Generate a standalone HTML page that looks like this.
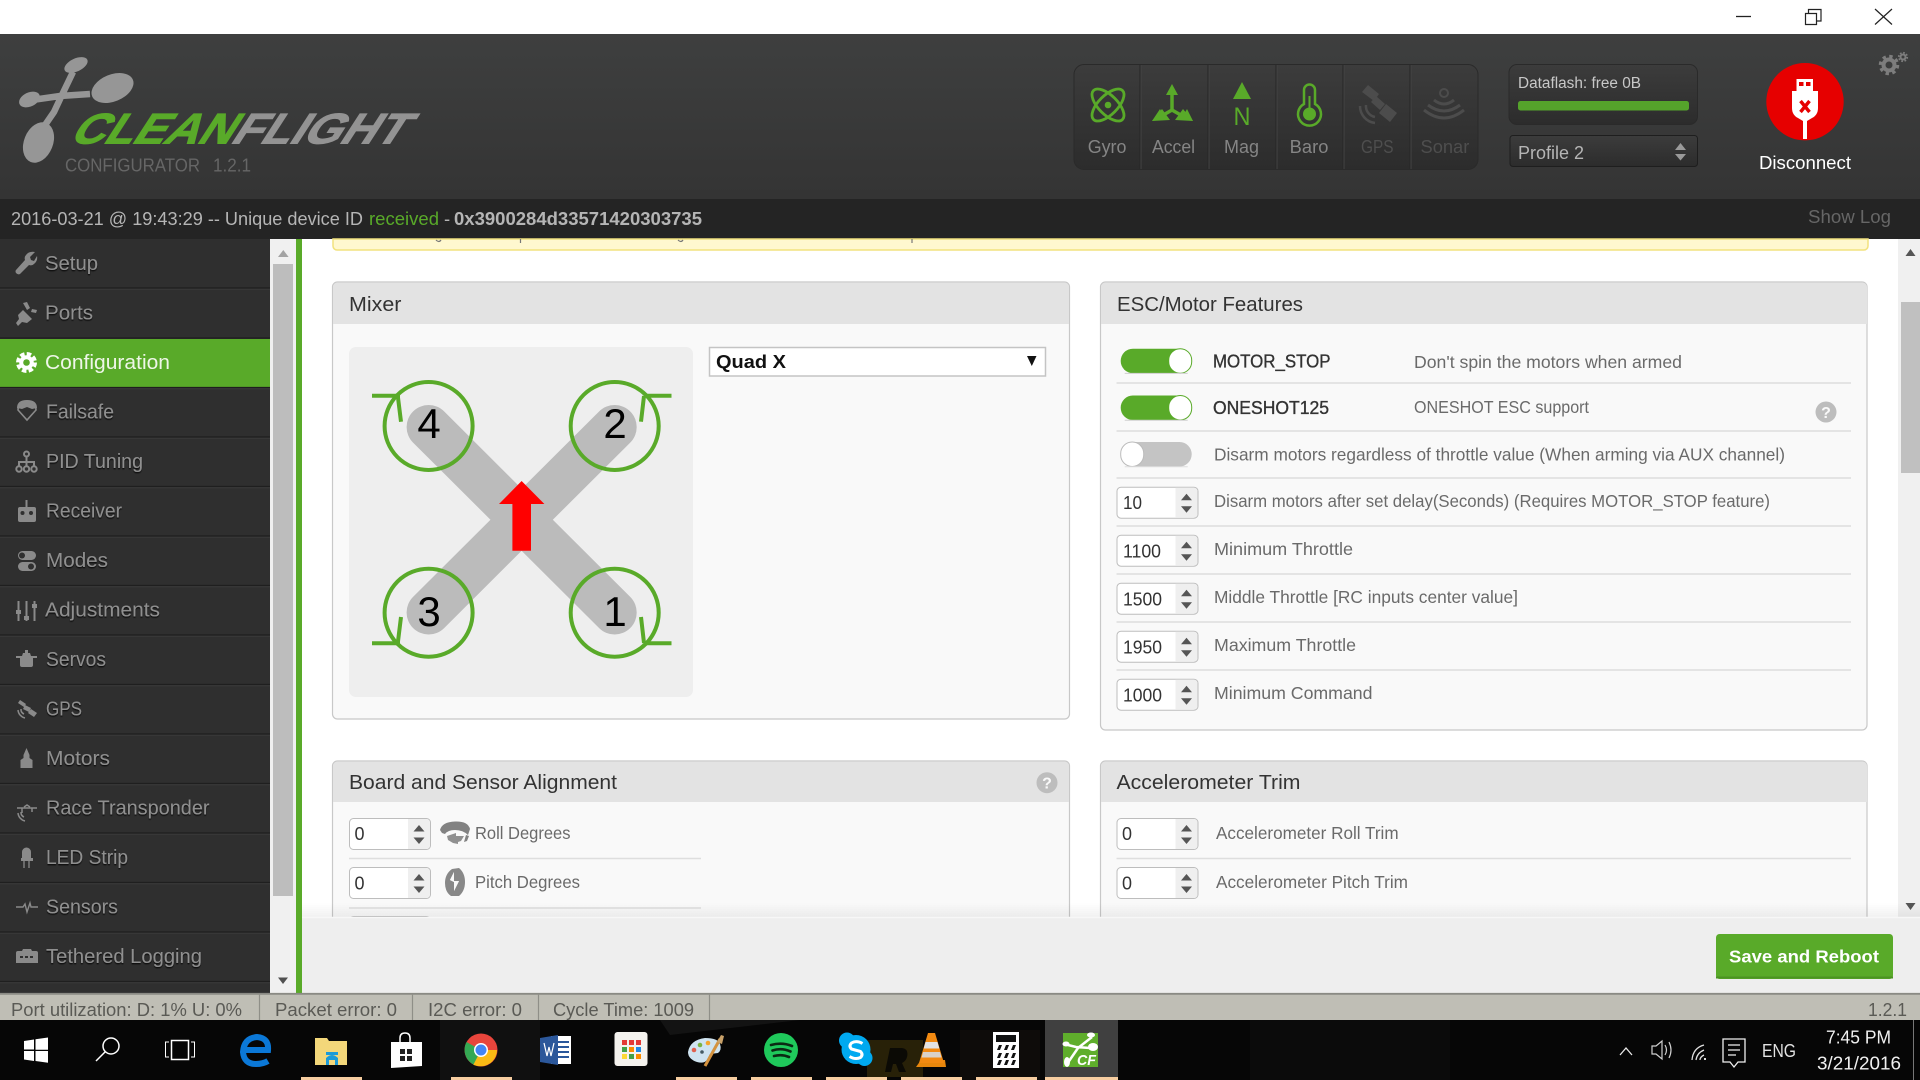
<!DOCTYPE html>
<html lang="en"><head><meta charset="utf-8"><title>Cleanflight Configurator</title>
<style>
html,body{margin:0;padding:0;width:1920px;height:1080px;overflow:hidden;background:#fff}
svg{display:block}
text{font-family:"Liberation Sans",sans-serif;white-space:pre}
.nav{font-size:20px;fill:#8f8f8f}
.ph{font-size:20.5px;fill:#333}
.d{font-size:17.5px;fill:#6a6a6a}
.v{font-size:18px;fill:#333}
.s{font-size:18px;fill:#5a5a55}
.se{font-size:18px;fill:#858585}
.ic{fill:#8a8a8a}
</style></head><body>
<svg xmlns="http://www.w3.org/2000/svg" width="1920" height="1080" viewBox="0 0 1920 1080">
<defs>
<linearGradient id="hd" x1="0" y1="0" x2="0" y2="1"><stop offset="0" stop-color="#3e3f3f"/><stop offset="1" stop-color="#343434"/></linearGradient>
<linearGradient id="grp" x1="0" y1="0" x2="0" y2="1"><stop offset="0" stop-color="#3c3c3c"/><stop offset="1" stop-color="#2c2c2c"/></linearGradient>
<linearGradient id="shd" x1="0" y1="0" x2="0" y2="1"><stop offset="0" stop-color="#000" stop-opacity="0"/><stop offset="1" stop-color="#000" stop-opacity=".06"/></linearGradient>
<filter id="ts" x="-5%" y="-5%" width="110%" height="110%"><feDropShadow dx="0" dy="1.200" stdDeviation=".5" flood-color="#000" flood-opacity=".85"/></filter>
<g id="inp"><rect x=".5" y=".5" width="81" height="31" rx="4" fill="#fff" stroke="#bdbdbd"/><path d="M59 1h18a4 4 0 0 1 4 4v22a4 4 0 0 1-4 4H59z" fill="#efefef"/><path d="M70 7l5.500 6.500h-11zM70 26l-5.500-6.500h11z" fill="#555"/></g>
<g id="ton"><rect x="0" y="0" width="71" height="24.500" rx="12.200" fill="#59aa29"/><rect x="48" y="0" width="23" height="24.500" rx="11.500" fill="#fff" stroke="#59aa29"/><path d="M4 24.700h63" stroke="#cfcfcf" stroke-width="1"/></g>
<g id="tof"><rect x="0" y="0" width="71" height="24.500" rx="12.200" fill="#c4c4c4"/><rect x="0" y="0" width="23" height="24.500" rx="11.500" fill="#fff" stroke="#bbb"/><path d="M4 24.700h63" stroke="#ddd" stroke-width="1"/></g>
<g id="q"><circle r="10.500" fill="#bdbdbd"/><text y="6" x="0" text-anchor="middle" font-size="16" font-weight="bold" fill="#f9f9f9">?</text></g>
</defs>

<!-- title bar -->
<rect width="1920" height="34" fill="#fff"/>
<path d="M1736 16.500h15" stroke="#222" stroke-width="1.300"/>
<path d="M1805.500 13.500h11v11h-11zM1808.500 13v-3.500h12.500v11.500h-4.500" fill="none" stroke="#222" stroke-width="1.200"/>
<path d="M1875 9l17 15.500M1892 9l-17 15.500" stroke="#222" stroke-width="1.200"/>

<!-- header -->
<rect y="34" width="1920" height="165" fill="url(#hd)"/>
<g fill="#969696">
<ellipse cx="112.500" cy="88" rx="22" ry="13.500" transform="rotate(-22 112.500 88)"/>
<ellipse cx="38.500" cy="142.500" rx="21" ry="14.500" transform="rotate(-68 38.500 142.500)"/>
<ellipse cx="76" cy="65" rx="12.500" ry="6.500" transform="rotate(-25 76 65)"/>
<ellipse cx="29.500" cy="99.500" rx="11" ry="7" transform="rotate(-25 29.500 99.500)"/>
</g>
<path d="M43 128L54 112L61 97L73 72M32 100L60 96L90 94" fill="none" stroke="#969696" stroke-width="6.500"/>
<g transform="translate(68,143.500) skewX(-33)">
<text x="0" y="0" font-size="43" font-weight="bold" fill="#59aa29" stroke="#59aa29" stroke-width="1" textLength="161" lengthAdjust="spacingAndGlyphs">CLEAN</text>
<text x="161" y="0" font-size="43" font-weight="bold" fill="#939393" stroke="#939393" stroke-width="1" textLength="172" lengthAdjust="spacingAndGlyphs">FLIGHT</text>
</g>
<text x="65" y="171.500" font-size="18" fill="#666" textLength="135" lengthAdjust="spacingAndGlyphs">CONFIGURATOR</text>
<text x="213" y="171.500" font-size="18" fill="#666" textLength="38" lengthAdjust="spacingAndGlyphs">1.2.1</text>

<!-- sensors -->
<rect x="1074" y="64.500" width="404" height="105" rx="10" fill="url(#grp)" stroke="#2a2a2a"/>
<g stroke="#262626" stroke-width="1"><path d="M1140 65v104M1208 65v104M1276 65v104M1343 65v104M1410 65v104"/></g>
<g stroke="#444" stroke-width="1"><path d="M1141 65v104M1209 65v104M1277 65v104M1344 65v104M1411 65v104"/></g>
<!-- gyro -->
<g fill="none" stroke="#59aa29" stroke-width="2.800"><ellipse cx="1108" cy="105" rx="20.500" ry="9.500" transform="rotate(45 1108 105)"/><ellipse cx="1108" cy="105" rx="20.500" ry="9.500" transform="rotate(-45 1108 105)"/></g><circle cx="1108" cy="105" r="3.300" fill="#59aa29"/>
<!-- accel -->
<path d="M1172 92v18l-14 8M1172 110l14 8" fill="none" stroke="#59aa29" stroke-width="3.500"/>
<path d="M1172 84l6 11h-12zM1152 121l8-12 5 9zM1193 121l-6-12-5 9z" fill="#59aa29"/><path d="M1152 121l18-1-8-11zM1193 121l-18-1 8-11z" fill="#59aa29"/>
<!-- mag -->
<path d="M1242 82l9 17h-18z" fill="#59aa29"/>
<text x="1233.500" y="125" font-size="25" fill="#59aa29" textLength="17" lengthAdjust="spacingAndGlyphs">N</text>
<!-- baro -->
<path d="M1304 104V90a5.500 5.500 0 0 1 11 0v14a11.500 11.500 0 1 1-11 0z" fill="none" stroke="#59aa29" stroke-width="2.500"/>
<circle cx="1309.500" cy="114" r="6.500" fill="#59aa29"/><path d="M1309.500 96v16" stroke="#59aa29" stroke-width="2"/>
<!-- gps -->
<g fill="#4c4c4c"><path d="M1368 85l11 9-5 7-12-9zM1386 104l11 9-7 9-11-9z"/><path d="M1376 96l9 8-5 6-9-8z"/></g>
<path d="M1360 106a17 17 0 0 0 15 17M1366 105a11 11 0 0 0 9 12" fill="none" stroke="#4c4c4c" stroke-width="2.500"/>
<!-- sonar -->
<circle cx="1444" cy="93" r="4" fill="none" stroke="#4c4c4c" stroke-width="2"/>
<path d="M1434 100q10 8 20 0M1428 105q16 12 32 0M1424 110q20 16 40 0" fill="none" stroke="#4c4c4c" stroke-width="3"/>
<g class="se">
<text x="1087.700" y="153" class="se" textLength="38.700" lengthAdjust="spacingAndGlyphs">Gyro</text>
<text x="1152" y="153" class="se" textLength="43" lengthAdjust="spacingAndGlyphs">Accel</text>
<text x="1224" y="153" class="se" textLength="35" lengthAdjust="spacingAndGlyphs">Mag</text>
<text x="1289.700" y="153" class="se" textLength="38.700" lengthAdjust="spacingAndGlyphs">Baro</text>
<text x="1361" y="153" class="se" style="fill:#4e4e4e" textLength="32.500" lengthAdjust="spacingAndGlyphs">GPS</text>
<text x="1420.500" y="153" class="se" style="fill:#4e4e4e" textLength="48.800" lengthAdjust="spacingAndGlyphs">Sonar</text>
</g>

<!-- dataflash -->
<rect x="1509" y="64.500" width="188.500" height="60" rx="8" fill="url(#grp)" stroke="#2a2a2a"/>
<text x="1518" y="88" font-size="15.500" fill="#c8c8c8" textLength="123" lengthAdjust="spacingAndGlyphs">Dataflash: free 0B</text>
<rect x="1518" y="101" width="171" height="9.500" rx="2.500" fill="#55a32b"/>
<rect x="1510" y="135.500" width="187.500" height="31" rx="3" fill="url(#grp)" stroke="#1e1e1e"/>
<text x="1518" y="159" font-size="18" fill="#b5b5b5" textLength="66" lengthAdjust="spacingAndGlyphs">Profile 2</text>
<path d="M1680.500 143l5.500 7h-11zM1680.500 160.500l-5.500-6.500h11z" fill="#9a9a9a"/>

<!-- disconnect -->
<circle cx="1805" cy="101.700" r="38.700" fill="#e60000"/>
<rect x="1796.500" y="79" width="16.500" height="12" fill="#fff"/>
<rect x="1799" y="82" width="4.500" height="4" fill="#e60000"/><rect x="1806" y="82" width="4.500" height="4" fill="#e60000"/>
<path d="M1792 91h26v17q0 7-6 10l-5 3v18h-4v-18l-5-3q-6-3-6-10z" fill="#fff"/>
<path d="M1800.500 101l9 11M1809.500 101l-9 11" stroke="#e60000" stroke-width="3.400"/>
<text x="1759" y="169" font-size="18" fill="#fff" textLength="92" lengthAdjust="spacingAndGlyphs">Disconnect</text>
<!-- settings gear -->
<g fill="none" stroke="#7d7d7d"><circle cx="1889" cy="65" r="5.500" stroke-width="4"/><circle cx="1889" cy="65" r="8.500" stroke-width="3.500" stroke-dasharray="3.300 3.370"/><circle cx="1903" cy="57" r="2.500" stroke-width="2"/><circle cx="1903" cy="57" r="4.200" stroke-width="1.800" stroke-dasharray="1.700 1.600"/></g>

<!-- log bar -->
<rect y="199" width="1920" height="40" fill="#242424"/>
<text x="11" y="225" font-size="18.500" fill="#b5b5b5" textLength="352" lengthAdjust="spacingAndGlyphs">2016-03-21 @ 19:43:29 -- Unique device ID</text>
<text x="369" y="225" font-size="18.500" fill="#59aa29" textLength="70" lengthAdjust="spacingAndGlyphs">received</text>
<text x="444" y="225" font-size="18.500" fill="#b5b5b5">-</text>
<text x="454" y="225" font-size="18.500" font-weight="bold" fill="#b5b5b5" textLength="248" lengthAdjust="spacingAndGlyphs">0x3900284d33571420303735</text>
<text x="1808" y="223" font-size="18" fill="#666" textLength="83" lengthAdjust="spacingAndGlyphs">Show Log</text>

<!-- content -->
<rect x="302" y="239" width="1598" height="680" fill="#fff"/>
<path d="M333 239v7a4 4 0 0 0 4 4h1527a4 4 0 0 0 4-4v-7z" fill="#fff8cf" stroke="#f2e27e" stroke-width="1.500"/>
<path d="M436 240q3 3 5 0M520.500 239v4M678 240q3 3 5 0M912 239v4" stroke="#777" fill="none" stroke-width="1.200"/>

<!-- mixer panel -->
<rect x="332.500" y="282" width="737" height="437" rx="5" fill="#f9f9f9" stroke="#c8c8c8" stroke-width="1.200"/>
<path d="M333 324v-37a4.500 4.500 0 0 1 4.500-4.500h727a4.500 4.500 0 0 1 4.500 4.500v37z" fill="#e3e3e3"/>
<text x="349" y="311" class="ph" textLength="52.400" lengthAdjust="spacingAndGlyphs">Mixer</text>
<rect x="349" y="347" width="344" height="350" rx="7" fill="#eee"/>
<path d="M428.600 427L614.700 612.500M614.700 427L428.600 612.500" stroke="#bbb" stroke-width="44" stroke-linecap="round"/>
<path d="M521.600 481l22.800 23h-13.400v46.700h-18.600v-46.700h-13.400z" fill="#f00"/>
<g fill="none" stroke="#59aa29" stroke-width="4">
<circle cx="428.600" cy="426" r="44"/><circle cx="614.700" cy="426" r="44"/><circle cx="428.600" cy="612.700" r="44"/><circle cx="614.700" cy="612.700" r="44"/>
<path d="M372 395.700h28M397.800 396L401 421.700M671.500 395.700h-28M644 396L641 421.700M372 643.300h28M397.800 643L401 617M671.500 643.300h-28M644 643L641 617"/>
</g>
<g font-size="42" fill="#000" text-anchor="middle">
<text x="429" y="438">4</text><text x="615" y="438">2</text><text x="429" y="626">3</text><text x="615" y="626">1</text>
</g>
<rect x="709.500" y="347.500" width="336" height="28.500" fill="#fff" stroke="#c4c4c4" stroke-width="1.500"/>
<text x="716" y="368" font-size="18.500" font-weight="bold" fill="#111" textLength="70" lengthAdjust="spacingAndGlyphs">Quad X</text>
<path d="M1027 356h9.500l-4.700 10z" fill="#111"/>

<!-- esc panel -->
<rect x="1100.500" y="282" width="766.500" height="448" rx="5" fill="#f9f9f9" stroke="#c8c8c8" stroke-width="1.200"/>
<path d="M1101 324v-37a4.500 4.500 0 0 1 4.500-4.500h757a4.500 4.500 0 0 1 4.500 4.500v37z" fill="#e3e3e3"/>
<text x="1117" y="311" class="ph" textLength="186" lengthAdjust="spacingAndGlyphs">ESC/Motor Features</text>
<g stroke="#dedede" stroke-width="1.500"><path d="M1116.500 383h734.500M1116.500 431h734.500M1116.500 478h734.500M1116.500 526h734.500M1116.500 574h734.500M1116.500 622h734.500M1116.500 670h734.500"/></g>
<use href="#ton" x="1120.700" y="348.700"/><use href="#ton" x="1120.700" y="395.500"/><use href="#tof" x="1120.700" y="442"/>
<text x="1213" y="367.700" font-size="18" fill="#333" stroke="#333" stroke-width=".35" textLength="117.500" lengthAdjust="spacingAndGlyphs">MOTOR_STOP</text>
<text x="1213" y="414" font-size="18" fill="#333" stroke="#333" stroke-width=".35" textLength="116" lengthAdjust="spacingAndGlyphs">ONESHOT125</text>
<text x="1414" y="368" class="d" textLength="268" lengthAdjust="spacingAndGlyphs">Don't spin the motors when armed</text>
<text x="1414" y="413" class="d" textLength="175" lengthAdjust="spacingAndGlyphs">ONESHOT ESC support</text>
<use href="#q" x="1826" y="412"/>
<text x="1214" y="460.500" class="d" textLength="571" lengthAdjust="spacingAndGlyphs">Disarm motors regardless of throttle value (When arming via AUX channel)</text>
<text x="1214" y="507" class="d" textLength="556" lengthAdjust="spacingAndGlyphs">Disarm motors after set delay(Seconds) (Requires MOTOR_STOP feature)</text>
<text x="1214" y="555" class="d" textLength="139" lengthAdjust="spacingAndGlyphs">Minimum Throttle</text>
<text x="1214" y="603" class="d" textLength="304" lengthAdjust="spacingAndGlyphs">Middle Throttle [RC inputs center value]</text>
<text x="1214" y="651" class="d" textLength="142" lengthAdjust="spacingAndGlyphs">Maximum Throttle</text>
<text x="1214" y="699" class="d" textLength="158.500" lengthAdjust="spacingAndGlyphs">Minimum Command</text>
<use href="#inp" x="1116.500" y="486.700"/><use href="#inp" x="1116.500" y="534.700"/><use href="#inp" x="1116.500" y="582.700"/><use href="#inp" x="1116.500" y="630.700"/><use href="#inp" x="1116.500" y="678.700"/>
<text x="1123" y="509" class="v" textLength="19" lengthAdjust="spacingAndGlyphs">10</text>
<text x="1123" y="557.500" class="v" textLength="38" lengthAdjust="spacingAndGlyphs">1100</text>
<text x="1123" y="605.500" class="v" textLength="39" lengthAdjust="spacingAndGlyphs">1500</text>
<text x="1123" y="653.500" class="v" textLength="39" lengthAdjust="spacingAndGlyphs">1950</text>
<text x="1123" y="701.500" class="v" textLength="39" lengthAdjust="spacingAndGlyphs">1000</text>

<!-- board panel -->
<rect x="332.500" y="761" width="737" height="200" rx="5" fill="#f9f9f9" stroke="#c8c8c8" stroke-width="1.200"/>
<path d="M333 802v-36a4.500 4.500 0 0 1 4.500-4.500h727a4.500 4.500 0 0 1 4.500 4.500v36z" fill="#e3e3e3"/>
<text x="349" y="789" class="ph" textLength="268" lengthAdjust="spacingAndGlyphs">Board and Sensor Alignment</text>
<use href="#q" x="1047" y="782.700"/>
<use href="#inp" x="349" y="818"/><use href="#inp" x="349" y="867"/><use href="#inp" x="349" y="916"/>
<text x="354.500" y="840" class="v">0</text><text x="354.500" y="889.500" class="v">0</text>
<path d="M349 858.500h352M349 908h352" stroke="#dedede" stroke-width="1.500"/>
<path d="M440 830q2-8 15-8.500t15 7.500l-2 6q-5-5-13-5-7 0-10 4l-3-1z" fill="#828282"/><path d="M447 836l9-3 0 3 8 0-3 5-3 1 0 2-5-1-5-3z" fill="#909090"/><path d="M466 835l3 1-2 5-3 1z" fill="#828282"/>
<path d="M452 869q-7 5-7 14t6 13h8q6-5 6-14t-6-14zM450 880l4-8v9l5 0-5 10v-9z" fill="#888"/><path d="M454 872v9l5 0-5 10v-9l-4-2z" fill="#f9f9f9"/>
<text x="475" y="839" class="d" textLength="95.500" lengthAdjust="spacingAndGlyphs">Roll Degrees</text>
<text x="475" y="888" class="d" textLength="105" lengthAdjust="spacingAndGlyphs">Pitch Degrees</text>

<!-- accel panel -->
<rect x="1100.500" y="761" width="766.500" height="200" rx="5" fill="#f9f9f9" stroke="#c8c8c8" stroke-width="1.200"/>
<path d="M1101 802v-36a4.500 4.500 0 0 1 4.500-4.500h757a4.500 4.500 0 0 1 4.500 4.500v36z" fill="#e3e3e3"/>
<text x="1116.500" y="789" class="ph" textLength="184" lengthAdjust="spacingAndGlyphs">Accelerometer Trim</text>
<use href="#inp" x="1116.500" y="818"/><use href="#inp" x="1116.500" y="867"/>
<text x="1122" y="840" class="v">0</text><text x="1122" y="889.500" class="v">0</text>
<path d="M1116.500 858.500h734.500" stroke="#dedede" stroke-width="1.500"/>
<text x="1216" y="839" class="d" textLength="182.600" lengthAdjust="spacingAndGlyphs">Accelerometer Roll Trim</text>
<text x="1216" y="888" class="d" textLength="192" lengthAdjust="spacingAndGlyphs">Accelerometer Pitch Trim</text>

<!-- right scrollbar -->
<rect x="1898" y="239" width="22" height="680" fill="#f0f0f0"/>
<rect x="1901" y="302" width="19" height="171" fill="#c0c0c0"/>
<path d="M1910.500 249l5 7h-10zM1910.500 910l-5-7h10z" fill="#555"/>

<!-- footer -->
<rect x="302" y="903" width="1618" height="15" fill="url(#shd)"/>
<rect x="302" y="917" width="1618" height="76" fill="#eee"/>
<path d="M302 917.500h1618" stroke="#f7f7f7" stroke-width="1.500"/>
<rect x="1716" y="934" width="177" height="45" rx="3.500" fill="#59aa29"/>
<path d="M1716 977.500h177" stroke="#4b9322" stroke-width="2"/>
<text x="1729" y="962.500" font-size="17.500" font-weight="bold" fill="#fff" textLength="150" lengthAdjust="spacingAndGlyphs">Save and Reboot</text>

<!-- sidebar -->
<rect x="0" y="239" width="270" height="754" fill="#2f2f2f"/>
<rect x="270" y="239" width="26" height="754" fill="#f0f0f0"/>
<rect x="273" y="264" width="20" height="632" fill="#bdbdbd"/>
<path d="M283.300 250l5.300 7h-10.600z" fill="#a3a3a3"/><path d="M283 984l-5-6.500h10z" fill="#505050"/>
<rect x="296" y="239" width="6" height="754" fill="#59aa29"/>
<rect x="0" y="339" width="270" height="48.500" fill="#59aa29"/>
<g stroke="#1f1f1f" stroke-width="1.200"><path d="M0 288h270M0 338h270M0 387.500h270M0 437h270M0 486.500h270M0 536h270M0 585.500h270M0 635h270M0 684.500h270M0 734h270M0 783.500h270M0 833h270M0 882.500h270M0 932h270M0 981.500h270"/></g>
<g stroke="#3a3a3a" stroke-width="1"><path d="M0 289.200h270M0 388.700h270M0 438.200h270M0 487.700h270M0 537.200h270M0 586.700h270M0 636.200h270M0 685.700h270M0 735.200h270M0 784.700h270M0 834.200h270M0 883.700h270M0 933.200h270M0 982.700h270"/></g>
<g filter="url(#ts)">
<text x="45" y="270" class="nav" textLength="53" lengthAdjust="spacingAndGlyphs">Setup</text>
<text x="45" y="319.500" class="nav" textLength="48" lengthAdjust="spacingAndGlyphs">Ports</text>
<text x="46" y="418.500" class="nav" textLength="68" lengthAdjust="spacingAndGlyphs">Failsafe</text>
<text x="46" y="468" class="nav" textLength="97" lengthAdjust="spacingAndGlyphs">PID Tuning</text>
<text x="46" y="517.500" class="nav" textLength="76" lengthAdjust="spacingAndGlyphs">Receiver</text>
<text x="46" y="567" class="nav" textLength="62" lengthAdjust="spacingAndGlyphs">Modes</text>
<text x="45" y="616.500" class="nav" textLength="115" lengthAdjust="spacingAndGlyphs">Adjustments</text>
<text x="46" y="666" class="nav" textLength="60" lengthAdjust="spacingAndGlyphs">Servos</text>
<text x="46" y="715.500" class="nav" textLength="36" lengthAdjust="spacingAndGlyphs">GPS</text>
<text x="46" y="765" class="nav" textLength="64" lengthAdjust="spacingAndGlyphs">Motors</text>
<text x="46" y="814.500" class="nav" textLength="163.500" lengthAdjust="spacingAndGlyphs">Race Transponder</text>
<text x="46" y="864" class="nav" textLength="82" lengthAdjust="spacingAndGlyphs">LED Strip</text>
<text x="46" y="913.500" class="nav" textLength="72" lengthAdjust="spacingAndGlyphs">Sensors</text>
<text x="46" y="963" class="nav" textLength="156" lengthAdjust="spacingAndGlyphs">Tethered Logging</text>
</g>
<text x="45" y="369" class="nav" style="fill:#eef6e8" textLength="125" lengthAdjust="spacingAndGlyphs">Configuration</text>

<!-- sidebar icons -->
<path d="M35 252l-5 5 1 3 3 1 3-5q1 5-3 8-2 2-5 1l-9 9q-2 1-4-1-1-2 0-3l9-10q-1-3 1-5 3-4 9-3z" class="ic"/>
<path d="M23 303l4 7 3-2-3-6zM31 312l5 1 1-3-5-1zM16 323l3-4-1-4 5-5 9 9-5 4-5-1-4 4z" class="ic"/>
<g fill="none" stroke="#fff"><circle cx="26.500" cy="362.500" r="5.300" stroke-width="4"/><circle cx="26.500" cy="362.500" r="8.600" stroke-width="3.800" stroke-dasharray="4.500 2.250"/></g>
<path d="M18 410q0-8 9-9 9 1 9 9l-9 10z" fill="none" stroke="#8a8a8a" stroke-width="1.600"/><path d="M17 408q0-8 10-8t10 8l-5 1-5-2-5 2z" class="ic"/>
<g fill="none" stroke="#8a8a8a" stroke-width="2"><circle cx="26.500" cy="454" r="2.500"/><circle cx="19" cy="469" r="2.700"/><circle cx="26.500" cy="469" r="2.700"/><circle cx="34" cy="469" r="2.700"/><path d="M26.500 457v9M19 466v-4h15v4"/></g>
<path d="M25.500 500h2v8h-2z" class="ic"/><rect x="18" y="507" width="18" height="15" rx="2" class="ic"/><circle cx="22.500" cy="513" r="2" fill="#2f2f2f"/><circle cx="31" cy="513" r="2" fill="#2f2f2f"/>
<rect x="18" y="551" width="18" height="9" rx="4.500" class="ic"/><rect x="18" y="562" width="18" height="9" rx="4.500" class="ic"/><circle cx="22" cy="555.500" r="3" fill="#2f2f2f"/><circle cx="31" cy="566.500" r="3" fill="#2f2f2f"/>
<g fill="none" stroke="#8a8a8a" stroke-width="2"><path d="M18.500 601v20M26.500 601v20M34.500 601v20"/><path d="M16 612h5M24 618h5M32 606h5" stroke-width="4"/></g>
<path d="M20 658h13v7q0 2-2 2H22q-2 0-2-2zM16 656h21v2H16zM23 653h7l1 3H22z" class="ic"/><rect x="25" y="650" width="3" height="3" class="ic"/>
<path d="M20 700l6 4-2 3-6-4zM31 709l6 4-3 4-6-4zM25 705l6 3-2 4-6-3z" class="ic"/><path d="M18 710a9 9 0 0 0 7 8M21 709a5 5 0 0 0 3 5" fill="none" stroke="#8a8a8a" stroke-width="1.500"/>
<path d="M26.500 748l3 7v3l3 2v8h-12v-8l3-2v-3z" class="ic"/>
<path d="M17 808h20M22 808v5M32 808v4M24 807l3-2 3 2M18 813a9 9 0 0 0 7 8M21 812a5 5 0 0 0 3 5" fill="none" stroke="#8a8a8a" stroke-width="1.500"/>
<path d="M22 858v-6a4.500 4.500 0 0 1 9 0v6h2v3H21v-3z" class="ic"/><path d="M24 861v7M29 861v7" stroke="#8a8a8a" stroke-width="1.300"/>
<path d="M16 907h7l2-3 2 8 3-9 1 4h7" fill="none" stroke="#8a8a8a" stroke-width="1.400"/>
<path d="M18 951h4l1-2h8l1 2h4q2 0 2 2v10H16v-10q0-2 2-2z" class="ic"/><path d="M20 957h14" stroke="#2f2f2f" stroke-width="2" stroke-dasharray="3 2"/>

<!-- status bar -->
<rect y="993" width="1920" height="27" fill="#bfbeb5"/>
<path d="M0 993.800h1920" stroke="#8a8a84" stroke-width="1.800"/>
<path d="M259.500 994v26M412.500 994v26M538.500 994v26M709.500 994v26" stroke="#8f8f88" stroke-width="1.200"/>
<text x="11" y="1016" class="s" textLength="231" lengthAdjust="spacingAndGlyphs">Port utilization: D: 1% U: 0%</text>
<text x="275" y="1016" class="s" textLength="122" lengthAdjust="spacingAndGlyphs">Packet error: 0</text>
<text x="428" y="1016" class="s" textLength="94" lengthAdjust="spacingAndGlyphs">I2C error: 0</text>
<text x="553" y="1016" class="s" textLength="141" lengthAdjust="spacingAndGlyphs">Cycle Time: 1009</text>
<text x="1868" y="1016" class="s" textLength="39" lengthAdjust="spacingAndGlyphs">1.2.1</text>

<!-- taskbar -->
<rect y="1020" width="1920" height="60" fill="#060606"/>
<path d="M660 1020h140l-130 15z" fill="#131313"/>
<rect x="440" y="1020" width="100" height="60" fill="#101010"/>
<rect x="867" y="1040" width="56" height="37" fill="#282108"/>
<path d="M885 1072l5-24h12q7 1 5 9-1 4-5 6l4 9h-7l-3-8h-3l-2 8z" fill="#0b0a05"/>
<rect x="960" y="1030" width="80" height="50" fill="#0e0c0a"/>
<rect x="1250" y="1020" width="200" height="60" fill="#0b0b0b"/>
<rect x="1045" y="1020" width="73" height="60" fill="#404040"/>
<g fill="#f6cda0"><rect x="301" y="1077" width="61" height="3"/><rect x="451" y="1077" width="61" height="3"/><rect x="676" y="1077" width="61" height="3"/><rect x="751" y="1077" width="61" height="3"/><rect x="826" y="1077" width="61" height="3"/><rect x="901" y="1077" width="61" height="3"/><rect x="976" y="1077" width="61" height="3"/><rect x="1045" y="1077" width="73" height="3"/></g>
<!-- windows -->
<path d="M24 1041l10-1.500v10H24zM35.500 1039.300l12.500-1.800v12.300H35.500zM24 1051h10v10l-10-1.500zM35.500 1051H48v11.800l-12.500-1.800z" fill="#fff"/>
<!-- search -->
<circle cx="111" cy="1046" r="8" fill="none" stroke="#fff" stroke-width="1.500"/><path d="M105 1052l-9 9" stroke="#fff" stroke-width="1.500"/>
<!-- task view -->
<rect x="171.500" y="1040.500" width="17" height="19" fill="none" stroke="#fff" stroke-width="1.500"/><path d="M169 1042h-3.500v15h3.500M191 1042h3.500v15H191" fill="none" stroke="#fff" stroke-width="1"/>
<!-- edge -->
<path d="M245 1050h23q1-12-11-13-13 1-14 15 1 12 13 12 7 0 12-3" fill="none" stroke="#0b78d7" stroke-width="6"/>
<!-- explorer -->
<path d="M315 1038h12l2 3h18v24h-32z" fill="#f3d77a"/><path d="M326 1058q6-6 12 0v7h-3v-5h-6v5h-3z" fill="#1c9bd8"/><rect x="326" y="1052" width="12" height="3" fill="#1c9bd8"/>
<!-- store -->
<path d="M391 1042h31v24l-31 2z" fill="#fff"/><path d="M400 1042v-4q0-5 5-5t5 5v4" fill="none" stroke="#fff" stroke-width="1.500"/><path d="M400 1049h5v5h-5zM407 1049h5v5h-5zM400 1056h5v5h-5zM407 1056h5v5h-5z" fill="#222"/>
<!-- chrome -->
<circle cx="481" cy="1050" r="16.500" fill="#e8453c"/><path d="M481 1050L497 1050A16.500 16.500 0 0 1 473 1064.500Z" fill="#f9ba14"/><path d="M481 1050l-7.500 14.500A16.500 16.500 0 0 1 466.500 1042Z" fill="#34a853"/><circle cx="481" cy="1050" r="7" fill="#fff"/><circle cx="481" cy="1050" r="5.500" fill="#4285f4"/>
<!-- word -->
<path d="M551 1036h20v28h-20z" fill="#fff"/><path d="M555 1042h14M555 1047h14M555 1052h14M555 1057h14" stroke="#2b579a" stroke-width="2"/><path d="M540 1038l18-3v30l-18-3z" fill="#2b579a"/><path d="M544 1043l3 13 2-9 2 9 3-13" fill="none" stroke="#fff" stroke-width="1.200"/>
<!-- grid app -->
<rect x="614.500" y="1032" width="33" height="34" rx="3" fill="#f4f2ee"/>
<g><rect x="622" y="1040" width="5" height="5" fill="#e53935"/><rect x="629" y="1040" width="5" height="5" fill="#e53935"/><rect x="636" y="1040" width="5" height="5" fill="#e53935"/><rect x="622" y="1047" width="5" height="5" fill="#43a047"/><rect x="629" y="1047" width="5" height="5" fill="#fb8c00"/><rect x="636" y="1047" width="5" height="5" fill="#1e88e5"/><rect x="622" y="1054" width="5" height="5" fill="#fdd835"/><rect x="629" y="1054" width="5" height="5" fill="#43a047"/><rect x="636" y="1054" width="5" height="5" fill="#fb8c00"/></g>
<!-- paint -->
<path d="M688 1052q2-12 17-14 13 0 15 6 2 6-2 9l-8 1-3 6q-3 4-10 2-9-3-9-10z" fill="#cfe3f0"/><circle cx="700" cy="1045" r="2.300" fill="#7cb342"/><circle cx="708" cy="1043" r="2.300" fill="#f4a52b"/><circle cx="694" cy="1050" r="2.300" fill="#e0614f"/><circle cx="702" cy="1052" r="1.800" fill="#455a64"/><path d="M705 1066l15-27" stroke="#d49340" stroke-width="3"/><path d="M717 1042l4-7 3 1-2 8z" fill="#c9a26a"/>
<!-- spotify -->
<circle cx="781" cy="1050" r="17" fill="#1fc95b"/><path d="M771 1045q11-3 21 1M772.500 1050.500q9-3 18 1M774 1056q8-2 15 1" fill="none" stroke="#0b2a14" stroke-width="2.600" stroke-linecap="round"/>
<!-- skype -->
<circle cx="856" cy="1049.500" r="14.500" fill="#00a9f0"/><circle cx="847" cy="1040.500" r="8" fill="#00a9f0"/><circle cx="864.500" cy="1058" r="8" fill="#00a9f0"/><path d="M862.500 1043.500q-6-3.500-11-.5-3 3 0 6l9 2.500q3 3 0 6-5 2.500-11-1" fill="none" stroke="#fff" stroke-width="3"/>
<!-- vlc -->
<path d="M917 1067l5-7h24l1 7z" fill="#e8870c" transform="translate(-1 0)"/>
<path d="M928 1033h7l9 30h-25z" fill="#f28a11"/><path d="M925.500 1042h12l1.800 6.500h-15.600z" fill="#e3e3e3"/><path d="M923 1052h17l1.600 5.500h-20z" fill="#d9d2c8"/>
<!-- calc -->
<rect x="993" y="1032" width="26" height="36" fill="#fff"/><rect x="996" y="1035" width="20" height="7" fill="#111"/>
<g fill="#111"><path d="M997 1050l2-5h3l-2 5zM1004 1050l2-5h3l-2 5zM1011 1050l2-5h3l-2 5zM997 1058l2-5h3l-2 5zM1004 1058l2-5h3l-2 5zM1011 1058l2-5h3l-2 5zM997 1065l2-5h3l-2 5zM1004 1065l2-5h3l-2 5zM1011 1065l2-5h3l-2 5z"/></g>
<!-- cleanflight -->
<rect x="1063" y="1033" width="35" height="34" fill="#5fae2c"/>
<path d="M1067 1064l11-16 14-11M1064 1044l12 3 14 1" fill="none" stroke="#fff" stroke-width="2.500"/>
<ellipse cx="1093" cy="1047" rx="5" ry="4" fill="#fff"/><ellipse cx="1067" cy="1062" rx="3" ry="5" fill="#fff"/><ellipse cx="1091" cy="1035" rx="4" ry="2.500" fill="#fff"/><ellipse cx="1066" cy="1044" rx="3.500" ry="2.500" fill="#fff"/>
<text x="1077" y="1065" font-size="15" font-weight="bold" font-style="italic" fill="#fff" textLength="19" lengthAdjust="spacingAndGlyphs">CF</text>
<!-- tray -->
<path d="M1620 1055l6-7 6 7" fill="none" stroke="#e8e8e8" stroke-width="1.300"/>
<path d="M1652 1046h4l6-5v18l-6-5h-4zM1665 1045q3 5 0 10M1669 1042q4 8 0 16" fill="none" stroke="#d0d0d0" stroke-width="1.200"/>
<path d="M1692 1060q1-12 12-15M1696 1060q1-7 8-10M1700 1060q0-3 4-5" fill="none" stroke="#e0e0e0" stroke-width="1.300"/><rect x="1704" y="1058" width="2" height="2" fill="#e0e0e0"/>
<path d="M1723 1039h22v23h-7l-4 5-4-5h-7z" fill="none" stroke="#f0f0f0" stroke-width="1.300"/><path d="M1728 1045h12M1728 1050h12M1728 1055h8" stroke="#f0f0f0" stroke-width="1.200"/>
<text x="1762" y="1057" font-size="18" fill="#e2e2e2" textLength="34" lengthAdjust="spacingAndGlyphs">ENG</text>
<text x="1826" y="1043.500" font-size="18.500" fill="#f0f0f0" textLength="65" lengthAdjust="spacingAndGlyphs">7:45 PM</text>
<text x="1817" y="1069.500" font-size="18.500" fill="#f0f0f0" textLength="84" lengthAdjust="spacingAndGlyphs">3/21/2016</text>
<path d="M1913.500 1020v60" stroke="#777" stroke-width="1"/>
</svg>
</body></html>
